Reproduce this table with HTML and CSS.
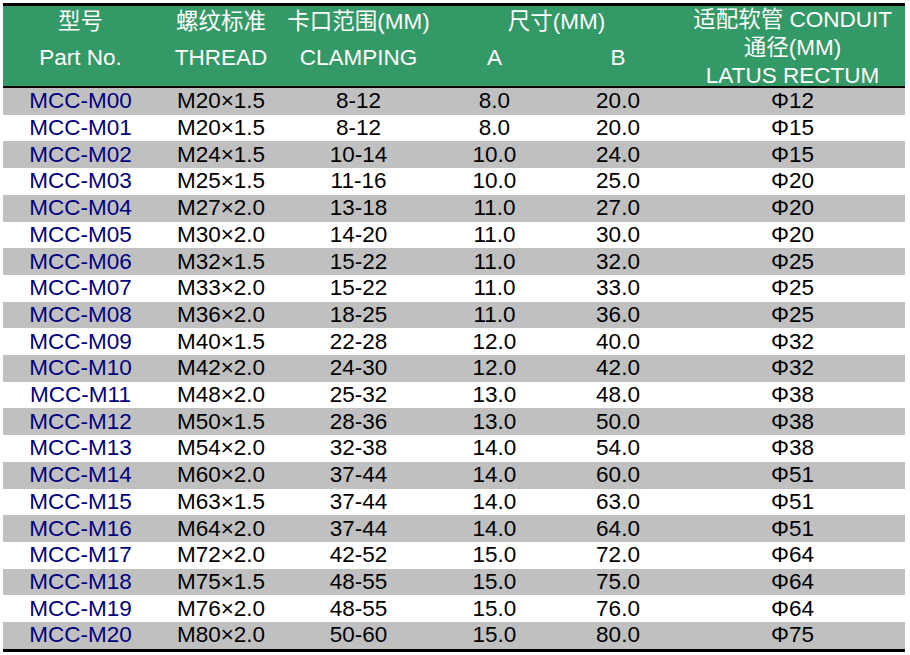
FILE: index.html
```html
<!DOCTYPE html>
<html>
<head>
<meta charset="utf-8">
<link rel="stylesheet" href="styles.css">
</head>
<body>
<table class="spec">
  <colgroup>
    <col class="c1"><col class="c2"><col class="c3"><col class="c4"><col class="c5"><col class="c6">
  </colgroup>
  <thead>
    <tr class="h1">
      <th>型号</th>
      <th>螺纹标准</th>
      <th>卡口范围(MM)</th>
      <th colspan="2">尺寸(MM)</th>
      <th rowspan="2" class="conduit"><div class="stack"><span>适配软管 CONDUIT</span><span>通径(MM)</span><span>LATUS RECTUM</span></div></th>
    </tr>
    <tr class="h2">
      <th>Part No.</th>
      <th>THREAD</th>
      <th>CLAMPING</th>
      <th>A</th>
      <th>B</th>
    </tr>
  </thead>
  <tbody>
    <tr><td class="pn">MCC-M00</td><td>M20×1.5</td><td>8-12</td><td>8.0</td><td>20.0</td><td>Φ12</td></tr>
    <tr><td class="pn">MCC-M01</td><td>M20×1.5</td><td>8-12</td><td>8.0</td><td>20.0</td><td>Φ15</td></tr>
    <tr><td class="pn">MCC-M02</td><td>M24×1.5</td><td>10-14</td><td>10.0</td><td>24.0</td><td>Φ15</td></tr>
    <tr><td class="pn">MCC-M03</td><td>M25×1.5</td><td>11-16</td><td>10.0</td><td>25.0</td><td>Φ20</td></tr>
    <tr><td class="pn">MCC-M04</td><td>M27×2.0</td><td>13-18</td><td>11.0</td><td>27.0</td><td>Φ20</td></tr>
    <tr><td class="pn">MCC-M05</td><td>M30×2.0</td><td>14-20</td><td>11.0</td><td>30.0</td><td>Φ20</td></tr>
    <tr><td class="pn">MCC-M06</td><td>M32×1.5</td><td>15-22</td><td>11.0</td><td>32.0</td><td>Φ25</td></tr>
    <tr><td class="pn">MCC-M07</td><td>M33×2.0</td><td>15-22</td><td>11.0</td><td>33.0</td><td>Φ25</td></tr>
    <tr><td class="pn">MCC-M08</td><td>M36×2.0</td><td>18-25</td><td>11.0</td><td>36.0</td><td>Φ25</td></tr>
    <tr><td class="pn">MCC-M09</td><td>M40×1.5</td><td>22-28</td><td>12.0</td><td>40.0</td><td>Φ32</td></tr>
    <tr><td class="pn">MCC-M10</td><td>M42×2.0</td><td>24-30</td><td>12.0</td><td>42.0</td><td>Φ32</td></tr>
    <tr><td class="pn">MCC-M11</td><td>M48×2.0</td><td>25-32</td><td>13.0</td><td>48.0</td><td>Φ38</td></tr>
    <tr><td class="pn">MCC-M12</td><td>M50×1.5</td><td>28-36</td><td>13.0</td><td>50.0</td><td>Φ38</td></tr>
    <tr><td class="pn">MCC-M13</td><td>M54×2.0</td><td>32-38</td><td>14.0</td><td>54.0</td><td>Φ38</td></tr>
    <tr><td class="pn">MCC-M14</td><td>M60×2.0</td><td>37-44</td><td>14.0</td><td>60.0</td><td>Φ51</td></tr>
    <tr><td class="pn">MCC-M15</td><td>M63×1.5</td><td>37-44</td><td>14.0</td><td>63.0</td><td>Φ51</td></tr>
    <tr><td class="pn">MCC-M16</td><td>M64×2.0</td><td>37-44</td><td>14.0</td><td>64.0</td><td>Φ51</td></tr>
    <tr><td class="pn">MCC-M17</td><td>M72×2.0</td><td>42-52</td><td>15.0</td><td>72.0</td><td>Φ64</td></tr>
    <tr><td class="pn">MCC-M18</td><td>M75×1.5</td><td>48-55</td><td>15.0</td><td>75.0</td><td>Φ64</td></tr>
    <tr><td class="pn">MCC-M19</td><td>M76×2.0</td><td>48-55</td><td>15.0</td><td>76.0</td><td>Φ64</td></tr>
    <tr><td class="pn">MCC-M20</td><td>M80×2.0</td><td>50-60</td><td>15.0</td><td>80.0</td><td>Φ75</td></tr>
  </tbody>
</table>
</body>
</html>
```
FILE: styles.css
```css
html, body {
  margin: 0;
  padding: 0;
  background: #ffffff;
}

body {
  padding: 3px 0 0 3px;
}

.spec {
  border-collapse: collapse;
  table-layout: fixed;
  width: 902px;
  font-family: "Liberation Sans", Arial, "Noto Sans CJK SC", sans-serif;
  font-size: 22.5px;
  color: #000;
  border-top: 3px solid #000;
  border-bottom: 3px solid #000;
}

.c1 { width: 155px; }
.c2 { width: 126px; }
.c3 { width: 149px; }
.c4 { width: 123px; }
.c5 { width: 124px; }
.c6 { width: 225px; }

.spec th,
.spec td {
  padding: 0;
  text-align: center;
  white-space: nowrap;
  overflow: visible;
}

.spec thead th {
  background: #339966;
  color: #ffffff;
  font-weight: normal;
  line-height: 28px;
}

.spec thead {
  border-bottom: 2px solid #000;
}

.h1 th {
  height: 32px;
  vertical-align: middle;
}

.h2 th {
  height: 40px;
  padding-bottom: 8px;
  vertical-align: middle;
}

.spec th.conduit {
  vertical-align: top;
}

.stack {
  height: 80px;
  display: flex;
  flex-direction: column;
  align-items: center;
}

.stack span {
  display: block;
  height: 28px;
  line-height: 28px;
}

.spec tbody td {
  height: 26.71px;
  line-height: 26px;
  vertical-align: middle;
}

.spec tbody tr:nth-child(odd) td {
  background: #c0c0c0;
}

.spec tbody tr:nth-child(even) td {
  background: #ffffff;
}

.spec td.pn {
  color: #000080;
}
```
